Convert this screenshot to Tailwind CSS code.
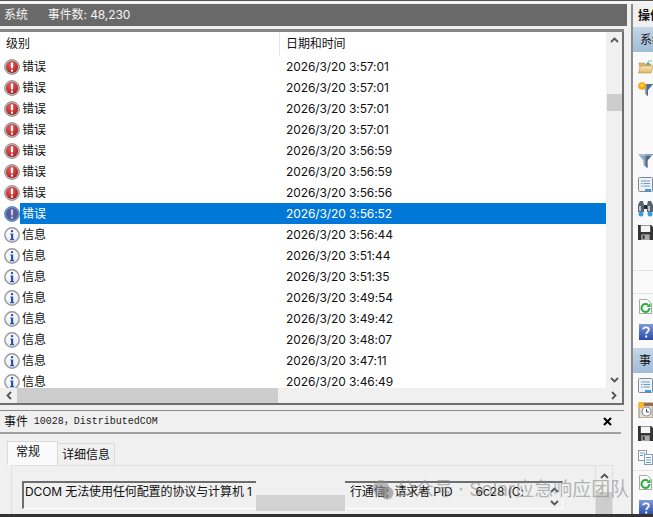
<!doctype html>
<html>
<head>
<meta charset="utf-8">
<script src="https://cdn.jsdelivr.net/npm/@tailwindcss/browser@4"></script>
</head>
<body class="bg-[#f0f0f0]">
<svg class="absolute w-0 h-0">
  <defs>
    <radialGradient id="redball" cx="40%" cy="30%" r="80%"><stop offset="0" stop-color="#ea5c5c"/><stop offset="1" stop-color="#a81818"/></radialGradient>
    <radialGradient id="whiteball" cx="40%" cy="30%" r="80%"><stop offset="0" stop-color="#ffffff"/><stop offset="1" stop-color="#dfe6f2"/></radialGradient>
    <linearGradient id="blue1" x1="0" y1="0" x2="0" y2="1"><stop offset="0" stop-color="#7a9ae0"/><stop offset="1" stop-color="#2a48a8"/></linearGradient>
    <linearGradient id="folder1" x1="0" y1="0" x2="0" y2="1"><stop offset="0" stop-color="#fbe9b8"/><stop offset="1" stop-color="#dcb868"/></linearGradient>
    <symbol id="err" viewBox="0 0 16 16">
      <circle cx="8" cy="8" r="7.5" fill="#b4b4b4" stroke="#8c8c8c" stroke-width=".8"/>
      <circle cx="8" cy="8" r="6" fill="url(#redball)"/>
      <rect x="6.9" y="3.2" width="2.2" height="6.4" rx="1" fill="#fff"/>
      <rect x="6.9" y="10.6" width="2.2" height="2.2" rx="1" fill="#fff"/>
    </symbol>
    <symbol id="errsel" viewBox="0 0 16 16">
      <circle cx="8" cy="8" r="7.5" fill="#6b94c8" stroke="#4a7fc4" stroke-width=".8"/>
      <circle cx="8" cy="8" r="6" fill="#5a5a96"/>
      <rect x="6.9" y="3.2" width="2.2" height="6.4" rx="1" fill="#c8cce8"/>
      <rect x="6.9" y="10.6" width="2.2" height="2.2" rx="1" fill="#c8cce8"/>
    </symbol>
    <symbol id="info" viewBox="0 0 16 16">
      <circle cx="8" cy="8" r="7.2" fill="url(#whiteball)" stroke="#999" stroke-width="1.4"/>
      <rect x="6.8" y="3" width="2.4" height="2.2" rx="1" fill="#2a50b0"/>
      <path d="M6.2 6.4h3v5.6h.9v1.2H6.1V12H7V7.6h-.8z" fill="#2a50b0"/>
    </symbol>
    <symbol id="funnel" viewBox="0 0 15 15">
      <path d="M0 1h15l-5.5 6.5V15L5.5 12V7.5z" fill="#8ea6ba"/><path d="M7.5 1H15L9.500 7.500V15l-2-1.500z" fill="#4f6c86"/><path d="M1 1.500h13v1H1z" fill="#c8d6e2"/>
    </symbol>
    <symbol id="funnelsun" viewBox="0 0 15 14">
      <path d="M2 2h13L10 8v6L7 12V8z" fill="#8ea6ba"/><path d="M8.500 2H15L10 8v6l-1.500-1z" fill="#4f6c86"/>
      <circle cx="4" cy="4" r="3.800" fill="#fba60d"/><circle cx="4" cy="3.500" r="1.800" fill="#ffd24a"/>
    </symbol>
    <symbol id="doc" viewBox="0 0 15 15">
      <rect x=".5" y=".5" width="14" height="14" rx="1" fill="#eef2f6" stroke="#7d8a98"/>
      <path d="M3 4h9M3 6.500h1.500m1 0H12M3 9h1.500m1 0H12" stroke="#6f9cc4" stroke-width="1.100"/><rect x="7" y="12" width="6" height="2" fill="#3a9bdc"/>
    </symbol>
    <symbol id="save" viewBox="0 0 16 16">
      <path d="M0 0h14l2 2v14H0z" fill="#333"/><rect x="3" y=".5" width="10" height="7" fill="#f5f5f5"/><rect x="3.500" y="10" width="9" height="6" fill="#a8a8a8"/><rect x="5" y="11" width="2" height="4" fill="#333"/>
    </symbol>
    <symbol id="refresh" viewBox="0 0 15 15">
      <path d="M1.500.5h8l4 4v10h-12z" fill="#fbfbfb" stroke="#a8a8a8"/>
      <path d="M11.500 9a4 4 0 1 1-1.300-3" fill="none" stroke="#2fae3a" stroke-width="2"/><path d="M12.500 4v4h-4z" fill="#2fae3a"/>
    </symbol>
    <symbol id="help" viewBox="0 0 14 16">
      <rect width="14" height="16" fill="url(#blue1)"/>
      <path d="M4.200 5.200C4.400 2.800 9.800 2.600 9.800 5.500c0 2.300-2.600 2.300-2.600 4.500" fill="none" stroke="#fff" stroke-width="1.800"/><rect x="6.200" y="11.500" width="2" height="2" fill="#fff"/>
    </symbol>
  </defs>
</svg>
<div class="relative w-[653px] h-[517px] overflow-hidden flex flex-col bg-[#f0f0f0] text-[12px] text-[#111] tracking-[-0.1px] font-['Inter','Noto_Sans_CJK_SC',sans-serif]">
  <div class="h-[1px] bg-[#555] shrink-0"></div>
  <div class="h-[3px] bg-[#f4f4f4] shrink-0"></div>
  <div class="flex flex-1 min-h-0">
    <!-- left -->
    <div class="w-[627px] shrink-0 flex flex-col">
      <div class="h-[22px] bg-[#696969] text-[#f4f4f4] flex items-center pl-[4px] gap-[20px] shrink-0">
        <span>系统</span><span>事件数: 48,230</span>
      </div>
      <div class="h-[3px] bg-[#f0f0f0] shrink-0"></div>
      <div class="h-[3px] bg-[#858585] mr-[3px] shrink-0"></div>
      <!-- list -->
      <div class="h-[373px] shrink-0 border-r-[2px] border-r-[#6e6e6e] border-b-[2px] border-b-[#6e6e6e] mr-[3px] flex flex-col bg-white">
        <div class="flex-1 min-h-0 flex">
          <div class="flex-1 min-w-0 flex flex-col">
            <div class="h-[24px] shrink-0 flex items-center">
              <div class="w-[280px] pl-[6px] border-r border-r-[#e5e5e5] h-full flex items-center">级别</div>
              <div class="pl-[6px]">日期和时间</div>
            </div>
            <div class="flex-1 min-h-0 overflow-hidden">
              <div class="h-[21px] flex items-center"><svg class="w-[16px] h-[16px] ml-[4px] mr-[2px]"><use href="#err"/></svg><span class="w-[258px]">错误</span><span class="w-[320px] pl-[6px]">2026/3/20 3:57:01</span></div>
              <div class="h-[21px] flex items-center"><svg class="w-[16px] h-[16px] ml-[4px] mr-[2px]"><use href="#err"/></svg><span class="w-[258px]">错误</span><span class="w-[320px] pl-[6px]">2026/3/20 3:57:01</span></div>
              <div class="h-[21px] flex items-center"><svg class="w-[16px] h-[16px] ml-[4px] mr-[2px]"><use href="#err"/></svg><span class="w-[258px]">错误</span><span class="w-[320px] pl-[6px]">2026/3/20 3:57:01</span></div>
              <div class="h-[21px] flex items-center"><svg class="w-[16px] h-[16px] ml-[4px] mr-[2px]"><use href="#err"/></svg><span class="w-[258px]">错误</span><span class="w-[320px] pl-[6px]">2026/3/20 3:57:01</span></div>
              <div class="h-[21px] flex items-center"><svg class="w-[16px] h-[16px] ml-[4px] mr-[2px]"><use href="#err"/></svg><span class="w-[258px]">错误</span><span class="w-[320px] pl-[6px]">2026/3/20 3:56:59</span></div>
              <div class="h-[21px] flex items-center"><svg class="w-[16px] h-[16px] ml-[4px] mr-[2px]"><use href="#err"/></svg><span class="w-[258px]">错误</span><span class="w-[320px] pl-[6px]">2026/3/20 3:56:59</span></div>
              <div class="h-[21px] flex items-center"><svg class="w-[16px] h-[16px] ml-[4px] mr-[2px]"><use href="#err"/></svg><span class="w-[258px]">错误</span><span class="w-[320px] pl-[6px]">2026/3/20 3:56:56</span></div>
              <div class="h-[21px] flex items-center"><svg class="w-[16px] h-[16px] ml-[4px] shrink-0"><use href="#errsel"/></svg><div class="flex-1 h-full flex items-center bg-[#0078d7] text-white"><span class="w-[260px] pl-[2px]">错误</span><span class="pl-[6px]">2026/3/20 3:56:52</span></div></div>
              <div class="h-[21px] flex items-center"><svg class="w-[16px] h-[16px] ml-[4px] mr-[2px]"><use href="#info"/></svg><span class="w-[258px]">信息</span><span class="w-[320px] pl-[6px]">2026/3/20 3:56:44</span></div>
              <div class="h-[21px] flex items-center"><svg class="w-[16px] h-[16px] ml-[4px] mr-[2px]"><use href="#info"/></svg><span class="w-[258px]">信息</span><span class="w-[320px] pl-[6px]">2026/3/20 3:51:44</span></div>
              <div class="h-[21px] flex items-center"><svg class="w-[16px] h-[16px] ml-[4px] mr-[2px]"><use href="#info"/></svg><span class="w-[258px]">信息</span><span class="w-[320px] pl-[6px]">2026/3/20 3:51:35</span></div>
              <div class="h-[21px] flex items-center"><svg class="w-[16px] h-[16px] ml-[4px] mr-[2px]"><use href="#info"/></svg><span class="w-[258px]">信息</span><span class="w-[320px] pl-[6px]">2026/3/20 3:49:54</span></div>
              <div class="h-[21px] flex items-center"><svg class="w-[16px] h-[16px] ml-[4px] mr-[2px]"><use href="#info"/></svg><span class="w-[258px]">信息</span><span class="w-[320px] pl-[6px]">2026/3/20 3:49:42</span></div>
              <div class="h-[21px] flex items-center"><svg class="w-[16px] h-[16px] ml-[4px] mr-[2px]"><use href="#info"/></svg><span class="w-[258px]">信息</span><span class="w-[320px] pl-[6px]">2026/3/20 3:48:07</span></div>
              <div class="h-[21px] flex items-center"><svg class="w-[16px] h-[16px] ml-[4px] mr-[2px]"><use href="#info"/></svg><span class="w-[258px]">信息</span><span class="w-[320px] pl-[6px]">2026/3/20 3:47:11</span></div>
              <div class="h-[21px] flex items-center"><svg class="w-[16px] h-[16px] ml-[4px] mr-[2px]"><use href="#info"/></svg><span class="w-[258px]">信息</span><span class="w-[320px] pl-[6px]">2026/3/20 3:46:49</span></div>
            </div>
          </div>
          <!-- v scrollbar -->
          <div class="w-[16px] shrink-0 bg-[#f0f0f0] flex flex-col items-center justify-between relative">
            <svg class="w-[9px] h-[6px] mt-[5px]" viewBox="0 0 9 6"><path d="M1 5l3.500-3.500L8 5" fill="none" stroke="#555" stroke-width="1.800"/></svg>
            <div class="absolute top-[62px] left-[1px] right-0 h-[17px] bg-[#cdcdcd]"></div>
            <svg class="w-[9px] h-[6px] mb-[5px]" viewBox="0 0 9 6"><path d="M1 1l3.500 3.500L8 1" fill="none" stroke="#555" stroke-width="1.800"/></svg>
          </div>
        </div>
        <!-- h scrollbar -->
        <div class="h-[15px] shrink-0 flex bg-[#f0f0f0] items-center">
          <div class="w-[17px] flex justify-center"><svg class="w-[6px] h-[9px]" viewBox="0 0 6 9"><path d="M5 1L1.500 4.500 5 8" fill="none" stroke="#555" stroke-width="1.800"/></svg></div>
          <div class="w-[261px] h-full bg-[#cdcdcd]"></div>
          <div class="flex-1"></div>
          <div class="w-[17px] flex justify-center"><svg class="w-[6px] h-[9px]" viewBox="0 0 6 9"><path d="M1 1l3.500 3.500L1 8" fill="none" stroke="#555" stroke-width="1.800"/></svg></div>
        </div>
      </div>
      <div class="h-[5px] shrink-0"></div>
      <!-- detail -->
      <div class="flex-1 min-h-0 border-t border-t-[#8a8a8a] mr-[3px] flex flex-col">
        <div class="h-[21px] shrink-0 flex items-center justify-between pl-[4px] pr-[12px]">
          <span class="flex items-center gap-[6px]">事件<span class="font-['Liberation_Mono','Noto_Sans_CJK_SC',monospace] text-[10px] text-[#222] tracking-normal">10028，DistributedCOM</span></span>
          <svg class="w-[9px] h-[9px]" viewBox="0 0 9 9"><path d="M1 1l7 7M8 1L1 8" stroke="#000" stroke-width="2"/></svg>
        </div>
        <div class="h-[2px] bg-[#a0a0a0] shrink-0 mr-[3px]"></div>
        <div class="flex items-end pl-[7px] h-[24px] shrink-0 mt-[7px]">
          <div class="h-[24px] w-[51px] bg-[#fafafa] border border-[#d9d9d9] border-b-0 pl-[8px] pt-[1px]">常规</div>
          <div class="h-[22px] w-[57px] border border-[#d9d9d9] border-l-0 border-b-0 flex items-center justify-center">详细信息</div>
        </div>
        <div class="flex-1 min-h-0 ml-[11px] mr-[11px] border-t border-x border-[#e0e0e0] flex">
          <div class="flex-1 min-w-0 pt-[15px] pl-[10px]">
            <div class="w-[541px] h-[28px] border-t-[2px] border-l-[2px] border-t-[#6e6e6e] border-l-[#6e6e6e] border-b border-r border-b-white border-r-white flex justify-between">
              <div class="whitespace-nowrap pl-[1px] overflow-hidden">DCOM 无法使用任何配置的协议与计算机 1<span class="inline-block w-[98px]"></span>行通信; <span class="inline-block w-[2px]"></span>请求者 PID<span class="inline-block w-[23px]"></span>6c28 (C:</div>
              <div class="w-[16px] shrink-0 flex flex-col items-center gap-[7px] pt-[4px]">
                <svg class="w-[9px] h-[6px]" viewBox="0 0 9 6"><path d="M1 5l3.500-3.500L8 5" fill="none" stroke="#555" stroke-width="1.800"/></svg>
                <svg class="w-[9px] h-[6px]" viewBox="0 0 9 6"><path d="M1 1l3.500 3.500L8 1" fill="none" stroke="#555" stroke-width="1.800"/></svg>
              </div>
            </div>
          </div>
          <div class="w-[17px] shrink-0 border-l border-l-[#e0e0e0] flex flex-col items-center">
            <svg class="w-[9px] h-[6px] mt-[7px]" viewBox="0 0 9 6"><path d="M1 5l3.500-3.500L8 5" fill="none" stroke="#555" stroke-width="1.800"/></svg>
            <div class="mt-[13px] w-full flex-1 bg-[#cdcdcd]"></div>
          </div>
        </div>
      </div>
    </div>
    <!-- gap -->
    <div class="w-[4px] shrink-0"></div>
    <!-- right -->
    <div class="flex-1 min-w-0 border-l-[2px] border-l-[#8a8a8a] flex flex-col bg-[#f9f9f9] overflow-hidden">
      <div class="h-[23px] flex items-center pl-[5px] shrink-0 font-bold whitespace-nowrap bg-[#f0f0f0]">操作</div>
      <div class="h-[25px] bg-gradient-to-b from-[#c5d6e8] to-[#a0bcd8] flex items-center pl-[7px] shrink-0 whitespace-nowrap">系统</div>
      <div class="pl-[5px] flex flex-col">
        <svg class="w-[15px] h-[14px] mt-[8px] shrink-0" viewBox="0 0 15 14"><path d="M10 1h4" stroke="#5ee05e"/><path d="M1 3h5l1 1h6v4H2z" fill="#d8b868" stroke="#a88a40" stroke-width=".5"/><circle cx="10" cy="3.500" r="1.200" fill="#5a8fd0"/><path d="M2.500 6H15l-2 7H.5z" fill="url(#folder1)" stroke="#b89040" stroke-width=".6"/></svg>
        <svg class="w-[15px] h-[14px] mt-[8px] shrink-0"><use href="#funnelsun"/></svg>
        <svg class="w-[15px] h-[15px] mt-[57px] shrink-0"><use href="#funnel"/></svg>
        <svg class="w-[15px] h-[15px] mt-[9px] shrink-0"><use href="#doc"/></svg>
        <svg class="w-[15px] h-[17px] mt-[8px] shrink-0" viewBox="0 0 15 17"><path d="M2 1h3l1 4v7H0V5zM10 1h3l2 4v7H9V5z" fill="#56646f"/><rect x="6" y="5" width="3" height="4" fill="#2a2a2a"/><path d="M1 6h2v5H1zM10 6h2v5h-2z" fill="#b8c4ce"/><circle cx="3" cy="14" r="2.500" fill="#3a9bdc"/><circle cx="12" cy="14" r="2.500" fill="#3a9bdc"/></svg>
        <svg class="w-[15px] h-[15px] mt-[8px] shrink-0"><use href="#save"/></svg>
        <div class="h-[1px] bg-[#e4e4e4] mt-[30px] -ml-[5px] shrink-0"></div>
        <div class="h-[1px] bg-[#e4e4e4] mt-[22px] -ml-[5px] shrink-0"></div>
        <svg class="w-[15px] h-[15px] mt-[5px] shrink-0"><use href="#refresh"/></svg>
        <svg class="w-[14px] h-[16px] mt-[10px] ml-[1px] shrink-0"><use href="#help"/></svg>
      </div>
      <div class="h-[25px] mt-[8px] bg-gradient-to-b from-[#c5d6e8] to-[#a0bcd8] flex items-center pl-[6px] shrink-0 whitespace-nowrap">事</div>
      <div class="pl-[5px] flex flex-col">
        <svg class="w-[15px] h-[15px] mt-[5px] shrink-0"><use href="#doc"/></svg>
        <svg class="w-[15px] h-[16px] mt-[9px] shrink-0" viewBox="0 0 15 16"><rect x="1" y="1" width="14" height="15" fill="#e8e0d4" stroke="#8f8878"/><rect x="1" y="1" width="14" height="3" fill="#9c6b4a"/><circle cx="8.500" cy="9.500" r="4.500" fill="#fff" stroke="#7d8a98" stroke-width="1.200"/><path d="M8.500 7v3h2.500" fill="none" stroke="#445" stroke-width="1"/><circle cx="3" cy="3" r="3" fill="#fcb71c"/></svg>
        <svg class="w-[15px] h-[15px] mt-[8px] shrink-0"><use href="#save"/></svg>
        <svg class="w-[15px] h-[15px] mt-[9px] shrink-0" viewBox="0 0 15 15"><rect x=".5" y=".5" width="8" height="10" fill="#fff" stroke="#8a98a8"/><rect x="6.500" y="4.500" width="8" height="10" fill="#fff" stroke="#8a98a8"/><path d="M2 3h5M2 5.500h3M8 7.500h5M8 10h5M8 12.500h5" stroke="#5a9ad0"/></svg>
        <div class="h-[1px] bg-[#e4e4e4] mt-[5px] -ml-[5px] shrink-0"></div>
        <svg class="w-[15px] h-[15px] mt-[4px] shrink-0"><use href="#refresh"/></svg>
        <svg class="w-[14px] h-[16px] mt-[10px] ml-[1px] shrink-0"><use href="#help"/></svg>
      </div>
    </div>
  </div>
  <div class="absolute left-0 right-0 bottom-0 h-[3px] bg-[#333]"></div>
  <!-- blurred redaction + watermark -->
  <div class="absolute left-[256px] top-[481px] w-[89px] h-[14px] bg-[#f0f0f0]"></div>
  <div class="absolute left-[256px] top-[495px] w-[89px] h-[16px] bg-[#d2d2d2]"></div>
  <div class="absolute left-[372px] top-[476px] flex items-center gap-[2px] text-[19px] tracking-normal text-[#888]/60 whitespace-nowrap">
    <svg class="w-[22px] h-[22px]" viewBox="0 0 22 22"><circle cx="9" cy="9" r="8" fill="#888" fill-opacity=".55"/><circle cx="15" cy="14" r="6.500" fill="#777" fill-opacity=".55"/></svg>
    <span>公众号 · Solar应急响应团队</span>
  </div>
</div>
</body>
</html>
